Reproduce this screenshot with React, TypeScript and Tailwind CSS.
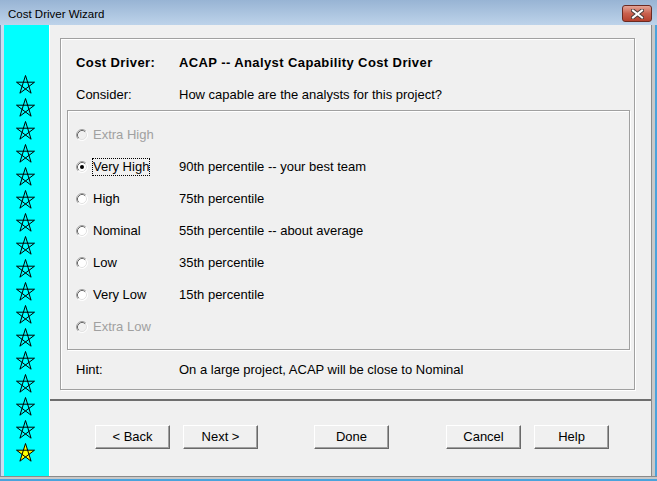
import React from 'react'

const font = { fontFamily: '"Liberation Sans", Arial, sans-serif' }

function Star({ filled = false }: { filled?: boolean }) {
  return (
    <svg width="19" height="19" viewBox="0 0 19 19">
      <polygon
        points="9.5,0.5 15.1,18.2 0.5,7.2 18.5,7.2 3.9,18.2"
        fill={filled ? '#ffff00' : 'none'}
        stroke="#000"
        strokeWidth="1"
      />
    </svg>
  )
}

function Radio({ checked = false, disabled = false }: { checked?: boolean; disabled?: boolean }) {
  return (
    <svg width="12" height="12" viewBox="0 0 12 12" className="shrink-0">
      <circle cx="6" cy="6" r="5.5" fill={disabled ? '#f0f0f0' : '#fff'} />
      <path d="M2.11 9.89 A5.5 5.5 0 0 1 9.89 2.11" fill="none" stroke="#a0a0a0" strokeWidth="1" />
      <path d="M9.89 2.11 A5.5 5.5 0 0 1 2.11 9.89" fill="none" stroke="#fff" strokeWidth="1" />
      <path d="M2.82 9.18 A4.5 4.5 0 0 1 9.18 2.82" fill="none" stroke="#696969" strokeWidth="1" />
      <path d="M9.18 2.82 A4.5 4.5 0 0 1 2.82 9.18" fill="none" stroke="#e3e3e3" strokeWidth="1" />
      {checked && <circle cx="6" cy="6" r="2" fill="#000" />}
    </svg>
  )
}

const levels = [
  { name: 'Extra High', desc: '', disabled: true },
  { name: 'Very High', desc: '90th percentile -- your best team', checked: true },
  { name: 'High', desc: '75th percentile' },
  { name: 'Nominal', desc: '55th percentile -- about average' },
  { name: 'Low', desc: '35th percentile' },
  { name: 'Very Low', desc: '15th percentile' },
  { name: 'Extra Low', desc: '', disabled: true },
]

function Button({ label, className = '' }: { label: string; className?: string }) {
  return (
    <div
      className={
        'w-[75px] h-[24px] flex items-center justify-center bg-[#f0f0f0] border border-t-white border-l-white border-r-[#696969] border-b-[#696969] shadow-[inset_-1px_-1px_0_#a0a0a0] text-[13px] text-black ' +
        className
      }
    >
      {label}
    </div>
  )
}

export default function App() {
  return (
    <div className="w-[657px] h-[481px] flex flex-col bg-[#c3d7ec] text-[13px] text-black" style={font}>
      {/* title bar */}
      <div className="h-[25px] flex items-start bg-gradient-to-b from-[#98b4d4] to-[#bdd3ea] pr-[5px]">
        <span className="pl-[8px] mt-[6px] leading-[16px] text-[11.5px]">Cost Driver Wizard</span>
        <div className="ml-auto mt-[5px] w-[30px] h-[17px] rounded-[3px] border border-[#6b2a22] bg-gradient-to-b from-[#e3a497] via-[#c9604e] to-[#b5402d] flex items-center justify-center">
          <svg width="13" height="10" viewBox="0 0 13 10">
            <path d="M2 1.5 L11 8.5 M11 1.5 L2 8.5" stroke="#4a3a38" strokeWidth="4" strokeLinecap="square" />
            <path d="M2 1.5 L11 8.5 M11 1.5 L2 8.5" stroke="#fff" strokeWidth="2" strokeLinecap="square" />
          </svg>
        </div>
      </div>

      <div className="h-[451px] flex">
        <div className="w-[4px] bg-[#c9dcef] border-l border-[#7a95b5]" />
        <div className="w-[45px] bg-[#00ffff] flex flex-col items-start pl-[12px] pt-[50px] gap-[4px]">
          {Array.from({ length: 16 }).map((_, i) => (
            <Star key={i} />
          ))}
          <Star filled />
        </div>

        <div className="w-[603px] flex flex-col bg-[#f0f0f0] border-l border-white border-r border-r-[#8a8a8a]">
          {/* upper panel */}
          <div className="h-[376px] border-b-2 border-b-[#6e6e6e] pt-[13px] pl-[10px]">
            <div className="w-[575px] h-[352px] border border-[#a0a0a0] shadow-[inset_1px_1px_0_#fff,1px_1px_0_#fff] pt-[14px]">
              <div className="h-[20px] flex items-center pl-[15px] font-bold tracking-[0.4px]">
                <span className="w-[103px]">Cost Driver:</span>
                <span>ACAP -- Analyst Capability Cost Driver</span>
              </div>
              <div className="h-[20px] mt-[12px] flex items-center pl-[15px]">
                <span className="w-[103px]">Consider:</span>
                <span>How capable are the analysts for this project?</span>
              </div>

              <div className="ml-[6px] mt-[5px] w-[563px] h-[240px] border border-[#a0a0a0] shadow-[inset_1px_1px_0_#fff,1px_1px_0_#fff] pt-[8px]">
                {levels.map((l) => (
                  <div key={l.name} className="h-[32px] flex items-center pl-[8px]">
                    <Radio checked={l.checked} disabled={l.disabled} />
                    <div className="w-[87px] ml-[4px] flex">
                      <span
                        className={
                          'leading-[16px] border ' +
                          (l.checked ? 'border-dotted border-black' : 'border-transparent') +
                          (l.disabled ? ' text-[#a0a0a0]' : '')
                        }
                      >
                        {l.name}
                      </span>
                    </div>
                    <span>{l.desc}</span>
                  </div>
                ))}
              </div>

              <div className="h-[20px] mt-[10px] flex items-center pl-[15px]">
                <span className="w-[103px]">Hint:</span>
                <span>On a large project, ACAP will be close to Nominal</span>
              </div>
            </div>
          </div>

          {/* buttons */}
          <div className="flex pt-[24px] pl-[45px]">
            <Button label="< Back" />
            <Button label="Next >" className="ml-[13px]" />
            <Button label="Done" className="ml-[56px]" />
            <Button label="Cancel" className="ml-[57px]" />
            <Button label="Help" className="ml-[13px]" />
          </div>
        </div>

        <div className="w-[5px] bg-[#c8c8c8] border-r-2 border-[#4aa3dc]" />
      </div>

      <div className="h-[5px] bg-[#c8c8c8] border-t border-[#8a8a8a] border-b-2 border-b-[#4aa3dc]" />
    </div>
  )
}
